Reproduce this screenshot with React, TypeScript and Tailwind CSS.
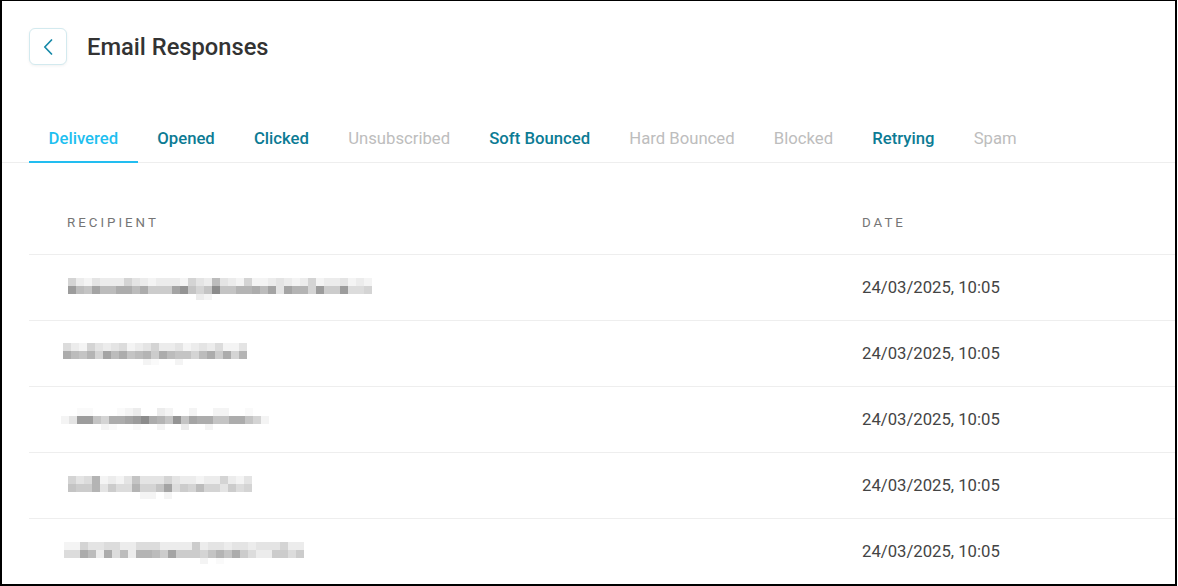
import React from "react";

type BlobRow = { y: number; h?: number; cells: string };
type Blob = { x: number; rows: BlobRow[] };

const blobs: Blob[] = [
  {
    x: 68,
    rows: [
      { y: 23, cells: "ADECDDDACDEDDDEACD7CDEAEEDCDEDAEDDCEDE" },
      { y: 31, cells: "3784775575999428A818866574C466A3993BBA" },
      { y: 39, h: 6, cells: "                DE" },
    ],
  },
  {
    x: 63,
    rows: [
      { y: 22, cells: "BDEACDCBEDCADDCEDCDBEEC" },
      { y: 30, cells: "5786A47587695788A7595A6" },
      { y: 38, h: 6, cells: "          EF  E        " },
    ],
  },
  {
    x: 61,
    rows: [
      { y: 21, cells: "  FF   FED  DE  E  EE  F  " },
      { y: 29, cells: "EC338A554315682845588558AE" },
      { y: 37, h: 6, cells: "     EF  F  E  D  E       " },
    ],
  },
  {
    x: 68,
    rows: [
      { y: 23, cells: "ACB6EDEC8CCCACDDEDDADEC" },
      { y: 31, cells: "8996C9BB6AA84B9A7AAC9BA" },
      { y: 39, h: 7, cells: "         EE E          " },
    ],
  },
  {
    x: 64,
    rows: [
      { y: 23, cells: "EEACCBBDDBBBDDDD9DCCDCCDCCCADD" },
      { y: 31, cells: "BB57D5B7D66794999A86859BDD99B9" },
      { y: 39, h: 6, cells: "                 E F          " },
    ],
  },
];

function grey(c: string) {
  const l = parseInt(c, 16);
  const v = Math.min(250, 132 + l * 8);
  return `rgb(${v},${v},${v})`;
}

function PixelBlob({ blob }: { blob: Blob }) {
  return (
    <svg width="400" height="65" className="block">
      {blob.rows.map((r, ri) =>
        r.cells.split("").map((c, i) =>
          c === " " ? null : (
            <rect
              key={`${ri}-${i}`}
              x={blob.x - 29 + i * 8}
              y={r.y}
              width={8}
              height={r.h ?? 8}
              fill={grey(c)}
            />
          )
        )
      )}
    </svg>
  );
}

const tabs: { label: string; state: "active" | "enabled" | "disabled" }[] = [
  { label: "Delivered", state: "active" },
  { label: "Opened", state: "enabled" },
  { label: "Clicked", state: "enabled" },
  { label: "Unsubscribed", state: "disabled" },
  { label: "Soft Bounced", state: "enabled" },
  { label: "Hard Bounced", state: "disabled" },
  { label: "Blocked", state: "disabled" },
  { label: "Retrying", state: "enabled" },
  { label: "Spam", state: "disabled" },
];

export default function App() {
  return (
    <div
      className="w-[1177px] h-[586px] overflow-hidden bg-white border-black border-l-2 border-r-2 border-b-2 border-t"
      style={{ fontFamily: "Roboto, 'Noto Sans', Arial, sans-serif" }}
    >
      <div className="flex items-center gap-5 pl-[27px] pt-[27px]">
        <button className="w-[38px] h-[37px] rounded-md border border-[#d3eaef] bg-white shadow-[0_1px_3px_rgba(0,0,0,0.06)] flex items-center justify-center">
          <svg width="10" height="16" viewBox="0 0 10 16" fill="none">
            <path d="M8.5 1 L1.8 8 L8.5 15" stroke="#1689a8" strokeWidth="1.7" strokeLinecap="round" strokeLinejoin="round" />
          </svg>
        </button>
        <h1 className="text-[23.7px] font-medium text-[#333333] leading-none pt-[2px]">Email Responses</h1>
      </div>

      <div className="mt-[62px] pl-[27px] flex border-b border-[#eeeeee]">
        {tabs.map((t) => (
          <div
            key={t.label}
            className={
              "px-[19.6px] pb-[10px] -mb-px text-[16.7px] leading-6 border-b-2 " +
              (t.state === "active"
                ? "border-[#22bdf0] text-[#1fbff0] font-medium"
                : t.state === "enabled"
                ? "border-transparent text-[#0c7b94] font-medium"
                : "border-transparent text-[#bdbdbd] font-normal")
            }
          >
            {t.label}
          </div>
        ))}
      </div>

      <div className="ml-[27px] pt-[29px]">
        <div className="grid grid-cols-[795px_1fr] h-[63px] items-center border-b border-[#eeeeee] text-[13.3px] tracking-[3px] text-[#757575]">
          <div className="pl-[38px]">RECIPIENT</div>
          <div className="pl-[38px]">DATE</div>
        </div>
        {blobs.map((b, i) => (
          <div key={i} className="grid grid-cols-[795px_1fr] h-[66px] items-center border-b border-[#eeeeee]">
            <div className="h-[65px]">
              <PixelBlob blob={b} />
            </div>
            <div className="pl-[38px] text-[16.7px] text-[#444444]">24/03/2025, 10:05</div>
          </div>
        ))}
      </div>
    </div>
  );
}
